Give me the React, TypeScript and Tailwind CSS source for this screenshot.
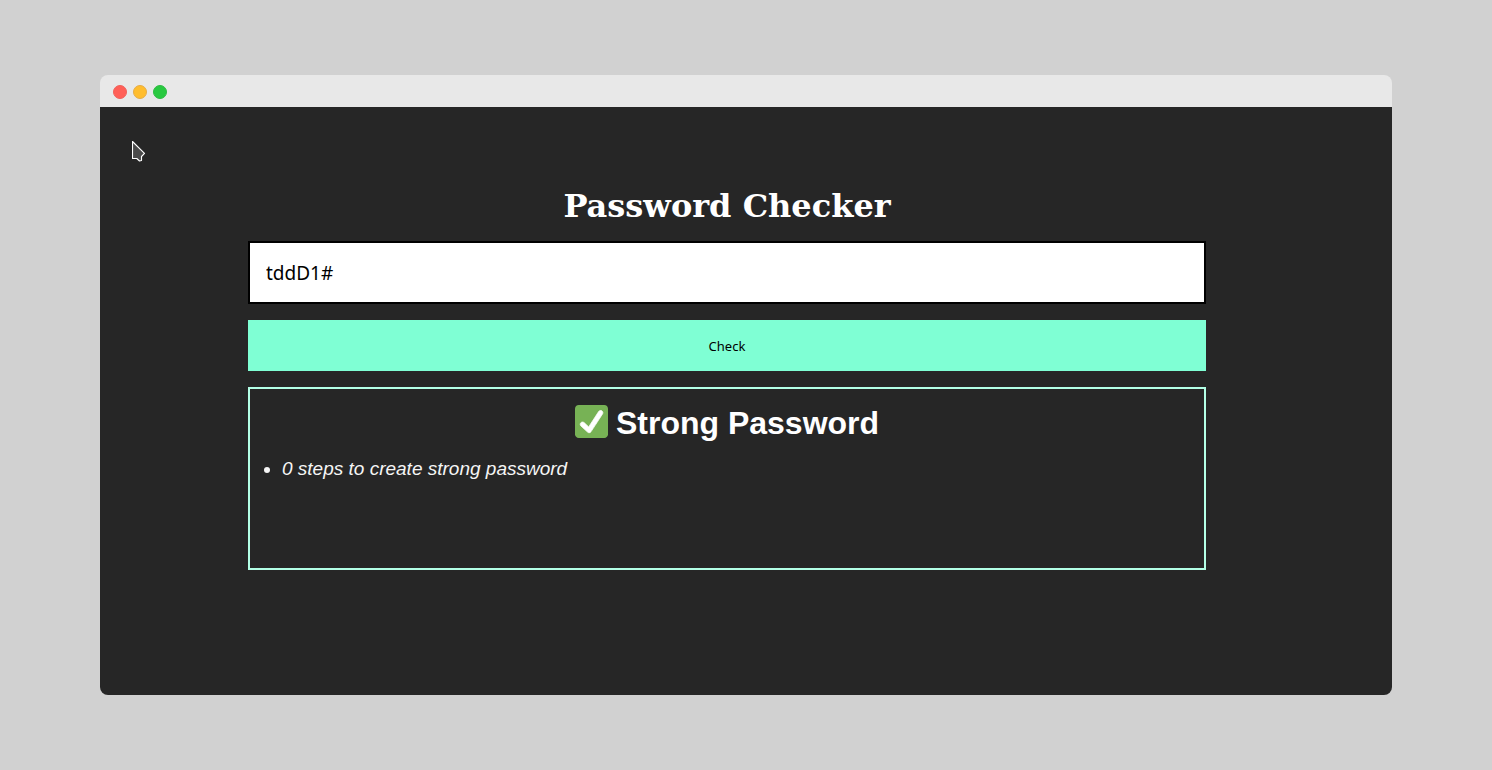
import { useState } from "react";

function WindowDots() {
  return (
    <div className="flex items-center gap-1.5" aria-hidden="true">
      <span className="size-3.5 rounded-full border border-[#f0605a] bg-[#ff5f57]" />
      <span className="size-3.5 rounded-full border border-[#e6ac45] bg-[#ffbd2e]" />
      <span className="size-3.5 rounded-full border border-[#2dba42] bg-[#28c940]" />
    </div>
  );
}

function Pointer() {
  return (
    <svg
      className="pointer-events-none absolute left-8 top-[34px] h-[21px] w-[14px]"
      viewBox="0 0 14 21"
      aria-hidden="true"
    >
      <path
        d="M.5 .5 12.5 12.3 9.5 15.5V19.5L7.5 20 4.8 17.5H.5Z"
        fill="#4a4a4a"
        stroke="#fff"
        strokeWidth="1.15"
        strokeLinejoin="round"
      />
    </svg>
  );
}

function CheckMark() {
  return (
    <svg className="size-[33px] shrink-0" viewBox="0 0 36 36" aria-hidden="true">
      <path
        fill="#77b255"
        d="M36 32c0 2.209-1.791 4-4 4H4c-2.209 0-4-1.791-4-4V4c0-2.209 1.791-4 4-4h28c2.209 0 4 1.791 4 4v28z"
      />
      <path
        fill="#fff"
        stroke="#fff"
        strokeWidth=".8"
        d="M29.28 6.362c-1.156-.751-2.704-.422-3.458.736L14.936 23.877l-5.029-4.65c-1.014-.938-2.596-.875-3.533.138-.937 1.014-.875 2.596.139 3.533l7.209 6.666c.48.445 1.09.665 1.696.665.673 0 1.534-.282 2.099-1.139.332-.506 12.5-19.27 12.5-19.27.751-1.159.421-2.707-.737-3.458z"
      />
    </svg>
  );
}

export default function App() {
  const [password, setPassword] = useState("tddD1#");

  return (
    <div className="flex min-h-screen flex-col bg-[#d1d1d1] px-[100px] py-[75px]">
      <div className="flex grow flex-col">
        <header className="flex h-8 items-center rounded-t-lg bg-[#e8e8e8] px-[13px] pt-[2px]">
          <WindowDots />
        </header>
        <main className="relative grow rounded-b-lg bg-[#262626] pb-8 pl-[148px] pr-[186px] pt-20 text-white">
          <Pointer />
          <form className="flex flex-col gap-4" onSubmit={(event) => event.preventDefault()}>
            <h1 className="text-center font-['DejaVu_Serif',serif] text-[32px] leading-[38px] font-bold">
              <label htmlFor="password">Password Checker</label>
            </h1>
            <input
              id="password"
              type="text"
              value={password}
              onChange={(event) => setPassword(event.target.value)}
              className="h-[63px] w-full border-2 border-black bg-white px-4 font-['Noto_Sans',sans-serif] text-[19px] text-black outline-none"
            />
            <button
              type="submit"
              className="h-[51px] bg-[#7fffd4] pt-[2px] font-['Noto_Sans',sans-serif] text-[13px] text-black"
            >
              Check
            </button>
            <section className="min-h-[183px] border-2 border-[#b3ffe6] p-4 font-['Liberation_Sans',Arial,sans-serif]">
              <h2 className="flex items-start justify-center gap-2 text-[32px] leading-9 font-bold">
                <CheckMark />
                Strong Password
              </h2>
              <ul className="mt-4 list-disc pl-4 text-[19px] leading-6 text-[#f5f5f5] italic">
                <li>0 steps to create strong password</li>
              </ul>
            </section>
          </form>
        </main>
      </div>
    </div>
  );
}
